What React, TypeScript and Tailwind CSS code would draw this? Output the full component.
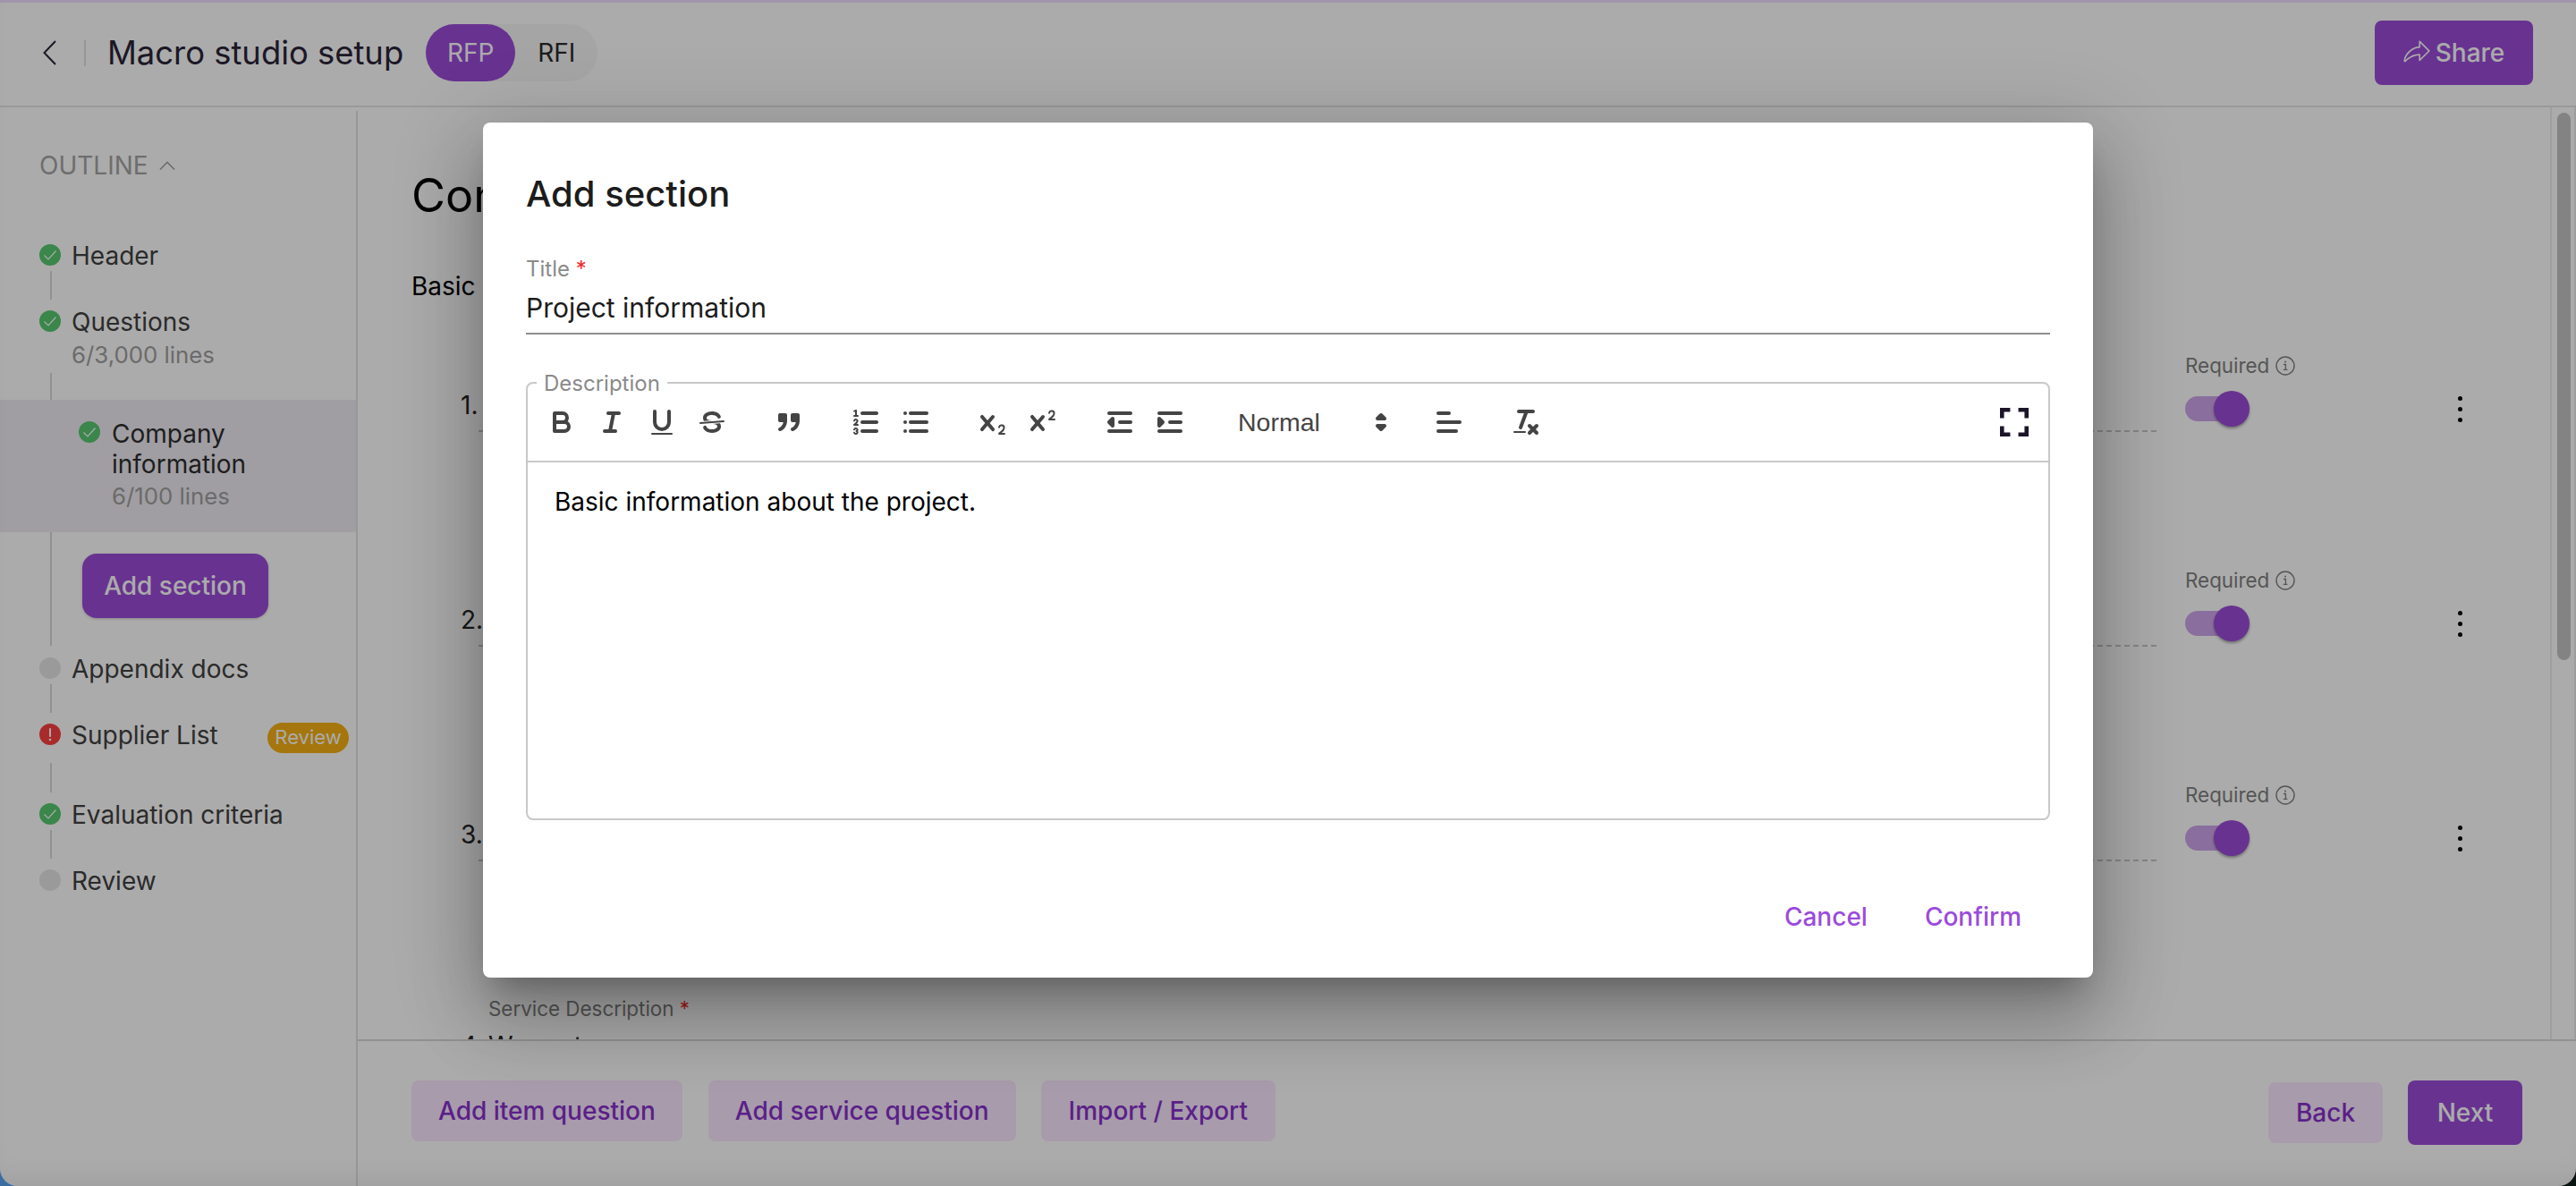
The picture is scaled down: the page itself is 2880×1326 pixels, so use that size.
import React from "react";
import { PiShareFatLight } from "react-icons/pi";

const S = { fill: "none", stroke: "#444", strokeWidth: 2, strokeLinecap: "round" as const, strokeLinejoin: "round" as const };
const T = { ...S, strokeWidth: 1 };
const F = { fill: "#444" };

function Q({ children }: { children: React.ReactNode }) {
  return (
    <span className="flex h-[48px] w-[56px] items-center justify-center">
      <svg viewBox="0 0 18 18" className="h-[36px] w-[36px]">{children}</svg>
    </span>
  );
}

const Bold = () => (
  <Q>
    <path {...S} d="M5,4H9.5A2.5,2.5,0,0,1,12,6.5v0A2.5,2.5,0,0,1,9.5,9H5A0,0,0,0,1,5,9V4A0,0,0,0,1,5,4Z" />
    <path {...S} d="M5,9h5.5A2.5,2.5,0,0,1,13,11.5v0A2.5,2.5,0,0,1,10.5,14H5a0,0,0,0,1,0,0V9A0,0,0,0,1,5,9Z" />
  </Q>
);
const Italic = () => (
  <Q>
    <line {...S} x1="7" x2="13" y1="4" y2="4" />
    <line {...S} x1="5" x2="11" y1="14" y2="14" />
    <line {...S} x1="8" x2="10" y1="14" y2="4" />
  </Q>
);
const Underline = () => (
  <Q>
    <path {...S} d="M5,3V9a4.012,4.012,0,0,0,4,4H9a4.012,4.012,0,0,0,4-4V3" />
    <rect {...F} height="1" rx="0.5" ry="0.5" width="12" x="3" y="15" />
  </Q>
);
const Strike = () => (
  <Q>
    <line {...T} x1="15.5" x2="2.5" y1="8.5" y2="9.5" />
    <path {...F} d="M9.007,8C6.542,7.791,6,7.519,6,6.5,6,5.792,7.283,5,9,5c1.571,0,2.765.679,2.969,1.309a1,1,0,0,0,1.9-.617C13.356,4.106,11.354,3,9,3,6.2,3,4,4.538,4,6.5a3.2,3.2,0,0,0,.5,1.843Z" />
    <path {...F} d="M8.984,10C11.457,10.208,12,10.479,12,11.5c0,.708-1.283,1.5-3,1.5-1.571,0-2.765-.679-2.969-1.309a1,1,0,1,0-1.9.617C4.644,13.894,6.646,15,9,15c2.8,0,5-1.538,5-3.5a3.2,3.2,0,0,0-.5-1.843Z" />
  </Q>
);
const Quote = () => (
  <Q>
    <rect {...S} fill="#444" height="3" width="3" x="4" y="5" />
    <rect {...S} fill="#444" height="3" width="3" x="11" y="5" />
    <path {...S} fill="#444" d="M7,8c0,4.031-3,5-3,5" />
    <path {...S} fill="#444" d="M14,8c0,4.031-3,5-3,5" />
  </Q>
);
const ListO = () => (
  <Q>
    <line {...S} x1="7" x2="15" y1="4" y2="4" />
    <line {...S} x1="7" x2="15" y1="9" y2="9" />
    <line {...S} x1="7" x2="15" y1="14" y2="14" />
    <line {...T} x1="2.5" x2="4.5" y1="5.5" y2="5.5" />
    <path {...F} d="M3.5,6A0.5,0.5,0,0,1,3,5.5V3.085l-0.276.138A0.5,0.5,0,0,1,2.053,3c-0.124-.247-0.023-0.324.224-0.447l1-.5A0.5,0.5,0,0,1,4,2.5v3A0.5,0.5,0,0,1,3.5,6Z" />
    <path {...T} d="M4.5,10.5h-2c0-.234,1.85-1.076,1.85-2.234A0.959,0.959,0,0,0,2.5,8.156" />
    <path {...T} d="M2.5,14.846a0.959,0.959,0,0,0,1.85-.109A0.7,0.7,0,0,0,3.75,14a0.688,0.688,0,0,0,.6-0.736,0.959,0.959,0,0,0-1.85-.109" />
  </Q>
);
const ListB = () => (
  <Q>
    <line {...S} x1="6" x2="15" y1="4" y2="4" />
    <line {...S} x1="6" x2="15" y1="9" y2="9" />
    <line {...S} x1="6" x2="15" y1="14" y2="14" />
    <line {...S} x1="3" x2="3" y1="4" y2="4" />
    <line {...S} x1="3" x2="3" y1="9" y2="9" />
    <line {...S} x1="3" x2="3" y1="14" y2="14" />
  </Q>
);
const Sub = () => (
  <Q>
    <path {...F} d="M15.5,15H13.861a3.858,3.858,0,0,0,1.914-2.975,1.8,1.8,0,0,0-1.6-1.751A1.921,1.921,0,0,0,12.021,11.7a0.50013,0.50013,0,1,0,.957.291h0a0.914,0.914,0,0,1,1.053-.725,0.81,0.81,0,0,1,.744.762c0,1.076-1.16971,1.86982-1.93971,2.43082A1.45639,1.45639,0,0,0,12,15.5a0.5,0.5,0,0,0,.5.5h3A0.5,0.5,0,0,0,15.5,15Z" />
    <path {...F} d="M9.65,5.241a1,1,0,0,0-1.409.108L6,7.964,3.759,5.349A1,1,0,0,0,2.192,6.59178Q2.21541,6.6213,2.241,6.649L4.684,9.5,2.241,12.35A1,1,0,0,0,3.71,13.70722q0.02557-.02768.049-0.05722L6,11.036,8.241,13.65a1,1,0,1,0,1.567-1.24277Q9.78459,12.3777,9.759,12.35L7.316,9.5,9.759,6.651A1,1,0,0,0,9.65,5.241Z" />
  </Q>
);
const Sup = () => (
  <Q>
    <path {...F} d="M15.5,7H13.861a4.015,4.015,0,0,0,1.914-2.975,1.8,1.8,0,0,0-1.6-1.751A1.922,1.922,0,0,0,12.021,3.7a0.5,0.5,0,1,0,.957.291,0.917,0.917,0,0,1,1.053-.725,0.81,0.81,0,0,1,.744.762c0,1.077-1.164,1.925-1.934,2.486A1.423,1.423,0,0,0,12,7.5a0.5,0.5,0,0,0,.5.5h3A0.5,0.5,0,0,0,15.5,7Z" />
    <path {...F} d="M9.651,5.241a1,1,0,0,0-1.41.108L6,7.964,3.759,5.349a1,1,0,1,0-1.519,1.3L4.683,9.5,2.241,12.35a1,1,0,1,0,1.519,1.3L6,11.036,8.241,13.65a1,1,0,0,0,1.519-1.3L7.317,9.5,9.759,6.651A1,1,0,0,0,9.651,5.241Z" />
  </Q>
);
const Outdent = () => (
  <Q>
    <line {...S} x1="3" x2="15" y1="14" y2="14" />
    <line {...S} x1="3" x2="15" y1="4" y2="4" />
    <line {...S} x1="9" x2="15" y1="9" y2="9" />
    <polygon {...S} fill="#444" points="5 7 5 11 3 9 5 7" />
  </Q>
);
const Indent = () => (
  <Q>
    <line {...S} x1="3" x2="15" y1="14" y2="14" />
    <line {...S} x1="3" x2="15" y1="4" y2="4" />
    <line {...S} x1="9" x2="15" y1="9" y2="9" />
    <polygon {...S} fill="#444" points="3 7 3 11 5 9 3 7" />
  </Q>
);
const AlignL = () => (
  <Q>
    <line {...S} x1="3" x2="15" y1="9" y2="9" />
    <line {...S} x1="3" x2="13" y1="14" y2="14" />
    <line {...S} x1="3" x2="9" y1="4" y2="4" />
  </Q>
);
const Clean = () => (
  <Q>
    <line {...S} x1="5" x2="13" y1="3" y2="3" />
    <line {...S} x1="6" x2="9.35" y1="12" y2="3" />
    <line {...S} x1="11" x2="15" y1="11" y2="15" />
    <line {...S} x1="15" x2="11" y1="11" y2="15" />
    <rect {...F} height="1" rx="0.5" ry="0.5" width="7" x="2" y="14" />
  </Q>
);

function Dot({ kind }: { kind: "ok" | "todo" | "err" }) {
  if (kind === "todo") return <span className="h-[24px] w-[24px] shrink-0 rounded-full bg-[#e6e6e6]" />;
  if (kind === "err")
    return (
      <svg viewBox="0 0 24 24" className="h-[24px] w-[24px] shrink-0">
        <circle cx="12" cy="12" r="12" fill="#fb4040" />
        <rect x="11" y="5" width="2" height="10" rx="1" fill="#fff" />
        <circle cx="12" cy="18" r="1.3" fill="#fff" />
      </svg>
    );
  return (
    <svg viewBox="0 0 24 24" className="h-[24px] w-[24px] shrink-0">
      <circle cx="12" cy="12" r="12" fill="#58c871" />
      <path d="M5.5 12.5l4.5 4.5 8.5-9.5" fill="none" stroke="#fff" strokeWidth="1.2" />
    </svg>
  );
}

const Line = ({ h }: { h: string }) => <div className={`ml-[56px] w-[2px] bg-[#d9d9d9] ${h}`} />;

function Step({ kind, label, className, children }: { kind: "ok" | "todo" | "err"; label: string; className: string; children?: React.ReactNode }) {
  return (
    <div className={`flex h-[36px] items-center gap-[12px] pl-[44px] pr-[8px] ${className}`}>
      <Dot kind={kind} />
      <span className="flex-1 pt-[2px] text-[28px] leading-[36px] text-[#404040]">{label}</span>
      {children}
    </div>
  );
}

function Row({ n }: { n: string }) {
  return (
    <div className="flex h-[240px] shrink-0 items-start pr-[98px]">
      <span className="w-[75px] shrink-0 pl-[55px] pt-[44px] text-[28px] leading-[40px] text-[#262626]">{n}</span>
      <div className="h-[94px] flex-1 border-b-2 border-dashed border-[#c8c8c8]" />
      <div className="ml-[32px] w-[172px] shrink-0">
        <div className="flex h-[40px] items-center gap-[7px] text-[22.4px] text-[#7f7f7f]">
          Required
          <svg viewBox="0 0 22 22" className="h-[22px] w-[22px]">
            <circle cx="11" cy="11" r="10" fill="none" stroke="#7f7f7f" strokeWidth="1.4" />
            <path d="M9 9.5h2.4V15M8.8 15.4h4.6" fill="none" stroke="#7f7f7f" strokeWidth="1.3" />
            <circle cx="11" cy="6.4" r="1" fill="#7f7f7f" />
          </svg>
        </div>
        <div className="relative mt-[8px] h-[40px] w-[72px]">
          <div className="absolute left-0 top-[6px] h-[28px] w-[60px] rounded-full bg-[#cea6ec]" />
          <div className="absolute left-[32px] top-0 h-[40px] w-[40px] rounded-full bg-[#9c4bd8] shadow-[0_2px_3px_rgba(0,0,0,0.35)]" />
        </div>
      </div>
      <div className="ml-[132px] mt-[54px] flex h-[29px] w-[6px] shrink-0 flex-col items-center justify-between">
        <span className="h-[5px] w-[5px] rounded-full bg-black" />
        <span className="h-[5px] w-[5px] rounded-full bg-black" />
        <span className="h-[5px] w-[5px] rounded-full bg-black" />
      </div>
    </div>
  );
}

const softBtn = "h-[68px] rounded-[8px] bg-[#fbe7ff] text-[28px] font-medium text-[#8730cc]";

export default function App() {
  return (
    <div className="h-[1326px] w-[2880px] overflow-hidden bg-[linear-gradient(90deg,#3b6da0_0%,#3b6da0_2%,#0a1410_98%)] [font-family:Inter,sans-serif]">
      <div className="relative flex h-full w-full flex-col overflow-hidden rounded-b-[20px] bg-white">
        {/* Top bar */}
        <header className="flex h-[120px] shrink-0 items-center border-t-[3px] border-b-2 border-t-[#efe0ff] border-b-[#e4e4e4] pb-[3px] pl-[48px] pr-[48px]">
          <svg viewBox="0 0 15 28" className="h-[28px] w-[15px] shrink-0">
            <path d="M14 1L1.5 14 14 27" fill="none" stroke="#2b2438" strokeWidth="2" />
          </svg>
          <div className="ml-[31px] h-[29px] w-[2px] bg-[#e0e0e0]" />
          <h1 className="ml-[24px] text-[36.4px] font-normal leading-[48px] text-[#2b2438]">Macro studio setup</h1>
          <div className="ml-[25px] flex h-[64px] items-center rounded-full bg-[#f6f6f6]">
            <span className="flex h-[64px] w-[100px] items-center justify-center rounded-full bg-[#9c4bd8] text-[28px] text-white">RFP</span>
            <span className="flex h-[64px] w-[92px] items-center justify-center text-[28px] text-[#2b2b2b]">RFI</span>
          </div>
          <button className="ml-auto flex h-[72px] w-[177px] items-center justify-center gap-[4px] rounded-[8px] bg-[#9c4bd8] pr-[2px] text-[28px] font-medium text-white">
            <PiShareFatLight className="h-[34px] w-[34px]" />
            Share
          </button>
        </header>

        <div className="flex min-h-0 flex-1">
          {/* Outline */}
          <aside className="mt-[4px] w-[400px] shrink-0 border-r-2 border-[#e2e2e2]">
            <div className="ml-[44px] mt-[43px] flex h-[36px] items-center gap-[12px] text-[28px] leading-[36px] text-[#a4a4a4]">
              OUTLINE
              <svg viewBox="0 0 18 10" className="h-[10px] w-[18px]">
                <path d="M1 9.5L9 1.5l8 8" fill="none" stroke="#a4a4a4" strokeWidth="1.6" />
              </svg>
            </div>
            <Step kind="ok" label="Header" className="mt-[64px]" />
            <Line h="h-[32px]" />
            <Step kind="ok" label="Questions" className="mt-[6px]" />
            <div className="mt-[2px] pl-[80px] text-[25.8px] leading-[36px] text-[#a0a0a0]">6/3,000 lines</div>
            <div className="ml-[56px] mt-[2px] h-[30px] w-[2px] bg-[#d9d9d9]" />
            <div className="flex h-[148px] items-start gap-[13px] bg-[#efecf3] pl-[88px]">
              <div className="mt-[24px]">
                <Dot kind="ok" />
              </div>
              <div className="pt-[21px]">
                <div className="text-[28px] leading-[34px] text-[#2d2d2d]">Company<br />information</div>
                <div className="mt-[1px] text-[25.8px] leading-[36px] text-[#a0a0a0]">6/100 lines</div>
              </div>
            </div>
            <div className="flex h-[127px] items-start">
              <Line h="h-[127px]" />
              <button className="ml-[34px] mt-[24px] h-[72px] w-[208px] rounded-[16px] bg-[#9c4bd8] text-[28px] font-medium text-white shadow-[0_1px_3px_rgba(0,0,0,0.2)]">Add section</button>
            </div>
            <Step kind="todo" label="Appendix docs" className="mt-[7px]" />
            <Line h="h-[32px]" />
            <Step kind="err" label="Supplier List" className="mt-[6px]">
              <span className="mt-[7px] flex h-[34px] w-[91px] items-center justify-center rounded-full bg-[#f6b016] text-[22px] text-white">Review</span>
            </Step>
            <div className="ml-[56px] mt-[14px] h-[33px] w-[2px] bg-[#d9d9d9]" />
            <Step kind="ok" label="Evaluation criteria" className="mt-[6px]" />
            <Line h="h-[32px]" />
            <Step kind="todo" label="Review" className="mt-[6px]" />
          </aside>

          {/* Work area */}
          <div className="flex min-w-0 flex-1 flex-col">
            <main className="flex min-h-0 flex-1 overflow-hidden">
              <div className="min-w-0 flex-1 pl-[60px] pt-[67px]">
                <h2 className="whitespace-nowrap text-[52px] font-normal leading-[64px] text-black">Company information</h2>
                <p className="mt-[49px] text-[28px] leading-[40px] text-black">Basic information about the project.</p>
                <div className="mt-[49px] flex flex-col">
                  <Row n="1." />
                  <Row n="2." />
                  <Row n="3." />
                </div>
                <div className="ml-[86px] mt-[1px] text-[22.4px] leading-[36px] text-[#7f7f7f]">
                  Service Description <span className="text-[#f42828]">*</span>
                </div>
                <div className="mt-[3px] flex text-[28px] leading-[40px] text-[#262626]">
                  <span className="w-[86px] pl-[55px]">4.</span>
                  <span>Warranty</span>
                </div>
              </div>
              <div className="w-[29px] shrink-0 border-x-2 border-[#ececec] px-[6px] pt-[6px]">
                <div className="h-[612px] w-[15px] rounded-full bg-[#c4c4c4]" />
              </div>
            </main>
            <footer className="flex h-[164px] shrink-0 items-start border-t-2 border-[#d9d9d9] pl-[60px] pr-[60px]">
              <button className={`${softBtn} mt-[44px] px-[30px]`}>Add item question</button>
              <button className={`${softBtn} ml-[29px] mt-[44px] px-[30px]`}>Add service question</button>
              <button className={`${softBtn} ml-[28px] mt-[44px] px-[31px]`}>Import / Export</button>
              <button className={`${softBtn} ml-auto mt-[46px] w-[128px]`}>Back</button>
              <button className="ml-[28px] mt-[44px] h-[72px] w-[128px] rounded-[8px] bg-[#9c4bd8] text-[28px] font-medium text-white">Next</button>
            </footer>
          </div>
        </div>

        {/* Backdrop */}
        <div className="absolute inset-0 bg-[rgba(0,0,0,0.33)] shadow-[inset_0_-24px_30px_-18px_rgba(0,0,0,0.08)]" />

        {/* Dialog */}
        <section className="absolute left-[540px] top-[137px] flex h-[956px] w-[1800px] flex-col rounded-[8px] bg-white px-[48px] pt-[48px] shadow-[0_22px_30px_-14px_rgba(0,0,0,0.24),0_48px_76px_6px_rgba(0,0,0,0.17),0_18px_92px_16px_rgba(0,0,0,0.15)]">
          <h3 className="text-[40px] font-medium leading-[64px] text-[#1c1c1c]">Add section</h3>

          <label className="mt-[37px] block text-[24px] leading-[30px] text-[#8a8a8a]">
            Title <span className="text-[#f42828]">*</span>
          </label>
          <div className="mt-[6px] h-[52px] border-b-2 border-[#8e8e8e] text-[30px] leading-[44px] text-[#1c1c1c]">Project information</div>

          <div className="relative mt-[53px] flex h-[490px] flex-col rounded-[8px] border-2 border-[#c8c8c8]">
            <span className="absolute left-[10px] top-[-15px] bg-white px-[8px] text-[24px] leading-[30px] text-[#8a8a8a]">Description</span>
            <div className="flex h-[88px] shrink-0 items-center border-b-2 border-[#c8c8c8] pl-[10px] pr-[22px]">
              <Bold /><Italic /><Underline /><Strike />
              <div className="ml-[30px]"><Quote /></div>
              <div className="ml-[30px] flex"><ListO /><ListB /></div>
              <div className="ml-[30px] flex"><Sub /><Sup /></div>
              <div className="ml-[30px] flex"><Outdent /><Indent /></div>
              <div className="ml-[30px] flex h-[48px] w-[196px] items-center justify-between pl-[18px] text-[28.5px] text-[#444] [font-family:'Liberation_Sans',sans-serif]">
                Normal
                <svg viewBox="0 0 18 18" className="h-[36px] w-[36px]">
                  <polygon {...S} fill="#444" points="7 11 9 13 11 11 7 11" />
                  <polygon {...S} fill="#444" points="7 7 9 5 11 7 7 7" />
                </svg>
              </div>
              <div className="ml-[30px]"><AlignL /></div>
              <div className="ml-[30px]"><Clean /></div>
              <svg viewBox="5 5 14 14" className="ml-auto h-[32px] w-[32px]">
                <path d="M7 14H5v5h5v-2H7v-3zm-2-4h2V7h3V5H5v5zm12 7h-3v2h5v-5h-2v3zM14 5v2h3v3h2V5h-5z" fill="#1c1528" />
              </svg>
            </div>
            <div className="px-[30px] pt-[24px] text-[28px] leading-[40px] text-black">Basic information about the project.</div>
          </div>

          <div className="mt-[80px] flex justify-end gap-[16px] pr-[8px]">
            <button className="h-[56px] px-[24px] text-[28px] font-medium text-[#9b4bdc]">Cancel</button>
            <button className="h-[56px] px-[24px] text-[28px] font-medium text-[#9b4bdc]">Confirm</button>
          </div>
        </section>
      </div>
    </div>
  );
}
